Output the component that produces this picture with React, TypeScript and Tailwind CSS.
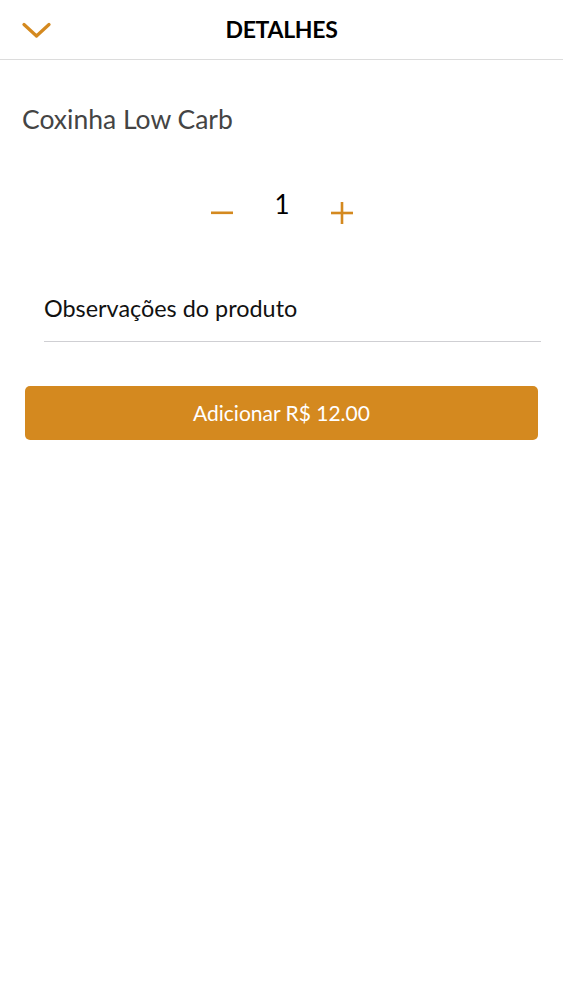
import React, { useState } from 'react';

const ORANGE = '#d4891f';

const App: React.FC = () => {
  const [qty, setQty] = useState(1);
  const [obs, setObs] = useState('');

  return (
    <div className="min-h-screen w-full bg-white text-[#111]" style={{ fontFamily: 'Lato, "Noto Sans", sans-serif' }}>
      {/* Header */}
      <div className="relative flex h-[60px] items-center justify-center border-b border-[#dcdcdc]">
        <button className="absolute left-[22px] top-[22px]" aria-label="Fechar">
          <svg width="29" height="17" viewBox="0 0 29 17" fill="none">
            <path d="M2 2.5 L14.5 14 L27 2.5" stroke={ORANGE} strokeWidth="3.2" strokeLinecap="round" strokeLinejoin="round" />
          </svg>
        </button>
        <h1 className="text-[23px] font-bold tracking-[-0.3px] text-black">DETALHES</h1>
      </div>

      {/* Product name */}
      <div className="px-[22px] pt-[43px]">
        <h2 className="text-[26.5px] leading-[32px] text-[#444]">Coxinha Low Carb</h2>
      </div>

      {/* Quantity */}
      <div className="mt-[53px] flex items-start justify-center gap-[42px]">
        <button onClick={() => setQty(q => Math.max(1, q - 1))} className="mt-[15px] flex h-[20px] w-[22px] items-center justify-center" aria-label="Diminuir">
          <svg width="22" height="4" viewBox="0 0 22 4">
            <rect x="0" y="0.5" width="22" height="2.6" fill={ORANGE} />
          </svg>
        </button>
        <span className="w-[14px] text-center text-[26px] leading-[32px] text-black">{qty}</span>
        <button onClick={() => setQty(q => q + 1)} className="mt-[14px] flex h-[22px] w-[22px] items-center justify-center" aria-label="Aumentar">
          <svg width="22" height="22" viewBox="0 0 22 22">
            <rect x="0" y="9.7" width="22" height="2.6" fill={ORANGE} />
            <rect x="9.7" y="0" width="2.6" height="22" fill={ORANGE} />
          </svg>
        </button>
      </div>

      {/* Observations */}
      <div className="ml-[44px] mr-[22px] mt-[71px] border-b border-[#cfcfd3] pb-[18px]">
        <input
          value={obs}
          onChange={e => setObs(e.target.value)}
          placeholder="Observações do produto"
          className="w-full bg-transparent text-[23.4px] leading-[26px] text-[#111] outline-none placeholder:text-[#111]"
        />
      </div>

      {/* Add button */}
      <div className="px-[25px] pt-[44px]">
        <button className="flex h-[54px] w-full items-center justify-center rounded-[5px] bg-[#d4891f] text-[21px] text-white">
          Adicionar R$ 12.00
        </button>
      </div>
    </div>
  );
};

export default App;
